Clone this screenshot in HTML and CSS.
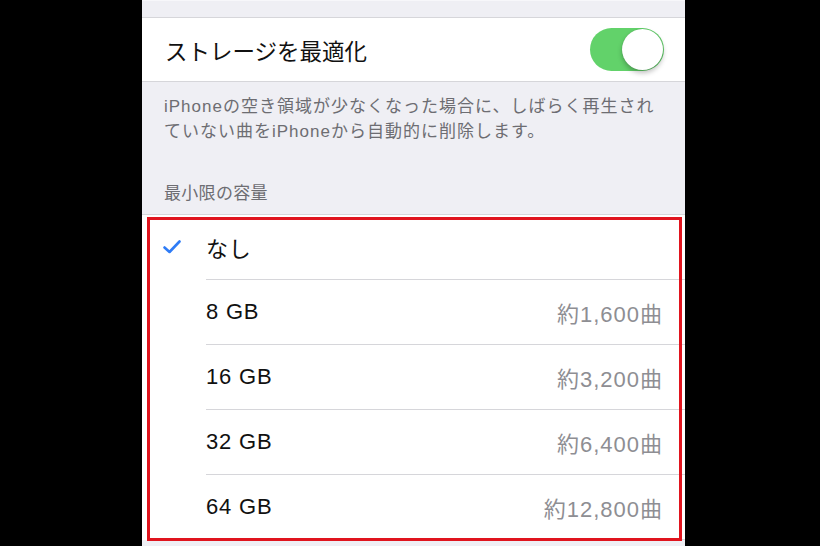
FILE: index.html
```html
<!DOCTYPE html>
<html lang="ja">
<head>
<meta charset="utf-8">
<link rel="stylesheet" href="styles.css">
</head>
<body>
<div class="panel">
  <div class="top-gap"></div>
  <div class="toggle-cell">
    <span class="cell-title">ストレージを最適化</span>
    <span class="switch"><span class="knob"></span></span>
  </div>
  <p class="footer">iPhoneの空き領域が少なくなった場合に、しばらく再生され<br>ていない曲をiPhoneから自動的に削除します。</p>
  <div class="header">最小限の容量</div>
  <div class="list">
    <div class="row">
      <span class="check"><svg width="18" height="14" viewBox="0 0 18 14"><polyline points="1.5,7.5 6.5,12 16.5,1.5" fill="none" stroke="#2f7cf6" stroke-width="2.6" stroke-linecap="round" stroke-linejoin="round"/></svg></span>
      <div class="row-body"><span class="label">なし</span></div>
    </div>
    <div class="row">
      <span class="check"></span>
      <div class="row-body"><span class="label">8 GB</span><span class="value">約1,600曲</span></div>
    </div>
    <div class="row">
      <span class="check"></span>
      <div class="row-body"><span class="label">16 GB</span><span class="value">約3,200曲</span></div>
    </div>
    <div class="row">
      <span class="check"></span>
      <div class="row-body"><span class="label">32 GB</span><span class="value">約6,400曲</span></div>
    </div>
    <div class="row">
      <span class="check"></span>
      <div class="row-body last"><span class="label">64 GB</span><span class="value">約12,800曲</span></div>
    </div>
  </div>
</div>
</body>
</html>
```

FILE: styles.css
```css
html, body {
  margin: 0;
  padding: 0;
  background: #000;
  height: 546px;
  overflow: hidden;
}
body {
  font-family: "Liberation Sans", "Noto Sans CJK JP", sans-serif;
}
.panel {
  margin-left: 142px;
  width: 543px;
  height: 546px;
  background: #efeff4;
  overflow: hidden;
}
.top-gap {
  height: 17px;
  border-top: 1px solid #f7f7fa;
  box-sizing: border-box;
}
.toggle-cell {
  height: 65px;
  box-sizing: border-box;
  background: #fff;
  border-top: 1px solid #d6d6da;
  border-bottom: 1px solid #d6d6da;
  display: flex;
  align-items: center;
  justify-content: space-between;
  padding: 0 21px 0 23px;
}
.cell-title {
  font-size: 22.5px;
  color: #111;
}
.switch {
  width: 74px;
  height: 43px;
  border-radius: 22px;
  background: #62d26a;
  display: flex;
  align-items: center;
  justify-content: flex-end;
  padding: 0 1px;
  box-sizing: border-box;
}
.knob {
  width: 41px;
  height: 41px;
  border-radius: 50%;
  background: #fff;
  box-shadow: 0 3px 5px rgba(0,0,0,0.25), 0 0 1px rgba(0,0,0,0.2);
}
.footer {
  margin: 0;
  padding: 12px 10px 0 22px;
  font-size: 17px;
  letter-spacing: 1px;
  line-height: 25px;
  color: #6d6d72;
  white-space: nowrap;
  height: 91px;
  box-sizing: border-box;
}
.header {
  padding-left: 22px;
  font-size: 17px;
  letter-spacing: 0.3px;
  line-height: 22px;
  color: #6d6d72;
  height: 41px;
  padding-top: 10px;
  box-sizing: border-box;
}
.list {
  position: relative;
  background: #fff;
  border-top: 1px solid #d6d6da;
}
.list::after {
  content: "";
  position: absolute;
  left: 5px;
  right: 3px;
  top: 2px;
  height: 318px;
  border: 3px solid #e0141e;
  pointer-events: none;
}
.row {
  display: flex;
  height: 65px;
}
.check {
  width: 64px;
  display: flex;
  align-items: center;
  justify-content: flex-start;
  padding-left: 21px;
  box-sizing: border-box;
}
.check svg {
  margin-top: -2px;
}
.row-body {
  flex: 1;
  display: flex;
  align-items: center;
  justify-content: space-between;
  border-bottom: 1px solid #d6d6da;
  padding-right: 22px;
  box-sizing: border-box;
}
.label {
  font-size: 22px;
  letter-spacing: 0.8px;
  color: #111;
}
.value {
  font-size: 22px;
  letter-spacing: 1px;
  color: #8e8e93;
}
```
